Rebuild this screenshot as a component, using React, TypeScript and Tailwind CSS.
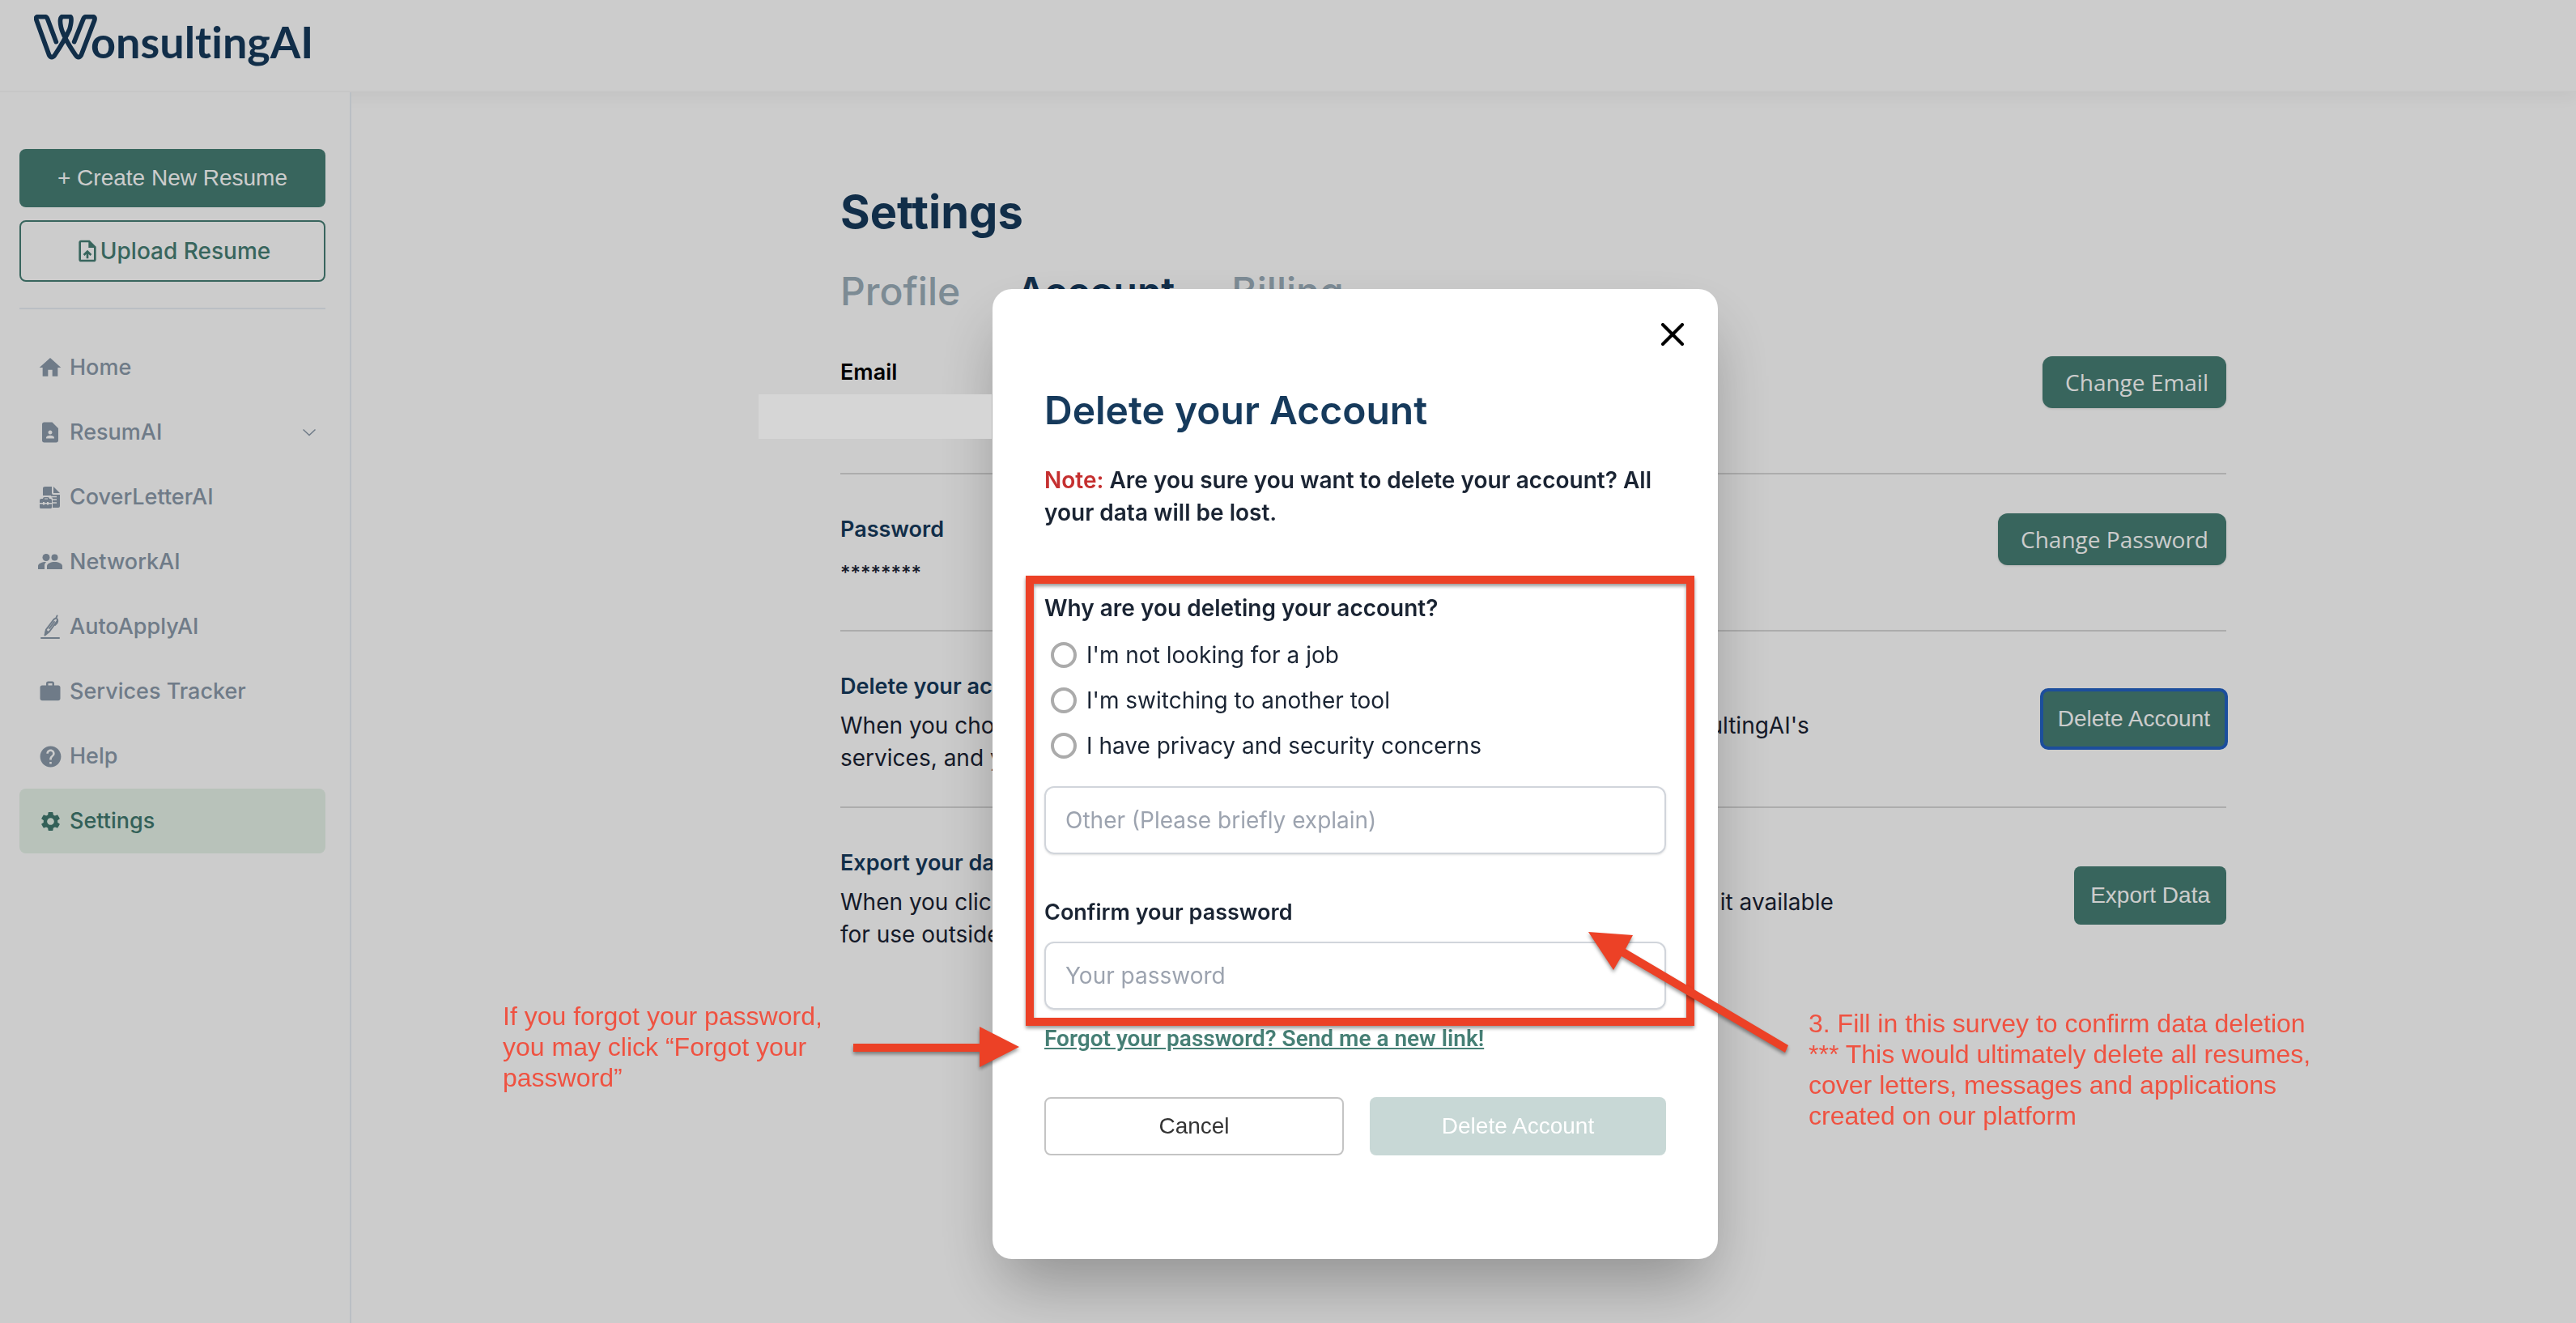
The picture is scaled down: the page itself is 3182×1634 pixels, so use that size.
import React from 'react';
import { MdContactPage, MdHelp, MdHome, MdSettings, MdUploadFile, MdWork } from 'react-icons/md';

const Logo: React.FC = () => (
  <a href="#" aria-label="WonsultingAI" className="flex items-start text-[#163a5c]">
    <svg
      className="h-14 w-[78px]"
      viewBox="36 24 234 168"
      fill="none"
      stroke="currentColor"
      strokeWidth="17"
      strokeLinecap="round"
      strokeLinejoin="round"
    >
      <path d="M118 125 L86 40 Q83 32 76 32 L50 32 Q41 32 45 44 L92 174 Q101 190 113 174 Q148 122 168 78 Q180 32 168 31 L144 31 Q128 32 136 70 Q144 106 190 174 Q201 190 211 174 L260 46 Q264 32 254 32 L230 32 Q222 32 219 40 L185 125" />
    </svg>
    <span className="-ml-2 font-[Lato,sans-serif] text-[54px] font-bold leading-[68px] [font-variant-ligatures:none]">
      onsultingAI
    </span>
  </a>
);

const CoverLetterIcon: React.FC = () => (
  <svg width="26" height="28" viewBox="0 0 26 28" fill="currentColor">
    <path d="M7 1h8v8q0 2 2 2h8v14q0 2-2 2h-7V16q0-2-2-2V12H4V3q0-2 3-2z" />
    <path d="M17 1l8 8h-8z" />
    <path d="M14 13.5h7M15 17h6M16 21h5" stroke="#fff" strokeWidth="1.5" />
    <path
      fillRule="evenodd"
      d="M4 16q0-2 2-2h4q2 0 2 2h1q2 0 2 2v3h-4v-1h-2v1H6v-1H4v1H0v-3q0-2 2-2zM6 15.500v1h4v-1zM0 22.500h4v1h2v-1h3v1h2v-1h4V26q0 2-1 2H1q-1 0-1-2z"
    />
  </svg>
);

const NetworkIcon: React.FC = () => (
  <svg width="30" height="20" viewBox="0 0 30 20" fill="currentColor">
    <circle cx="10" cy="4.500" r="4.500" />
    <circle cx="20.500" cy="4.500" r="4" />
    <path d="M11 19v-4c0-3 5-5 9.500-5S30 12 30 15v4z" />
    <path d="M0 19v-4c0-3 5-5 10-5-1.500 1.500-2 3-2 5v4z" />
  </svg>
);

const PenIcon: React.FC = () => (
  <svg width="24" height="30" viewBox="0 0 24 30" fill="none" stroke="currentColor" strokeLinecap="round" strokeLinejoin="round">
    <path d="M1 29h22" strokeWidth="2" />
    <path d="M5.500 25.500l1.500-7L16.500 6q2-2 3.500-1t.5 3L11 21z" strokeWidth="2" />
    <path d="M19.500 4l1-2.500M11 17l6-8M21 7q1 3-3 6" strokeWidth="2" />
    <path d="M5.500 25.500l4.500-4-3-2.500z" fill="currentColor" />
  </svg>
);

interface NavItem {
  label: string;
  icon: React.ReactNode;
  active?: boolean;
  expandable?: boolean;
}

const navItems: NavItem[] = [
  { label: 'Home', icon: <MdHome size={32} /> },
  { label: 'ResumAI', icon: <MdContactPage size={30} />, expandable: true },
  { label: 'CoverLetterAI', icon: <CoverLetterIcon /> },
  { label: 'NetworkAI', icon: <NetworkIcon /> },
  { label: 'AutoApplyAI', icon: <PenIcon /> },
  { label: 'Services Tracker', icon: <MdWork size={30} /> },
  { label: 'Help', icon: <MdHelp size={31} /> },
  { label: 'Settings', icon: <MdSettings size={29} />, active: true },
];

const Sidebar: React.FC = () => (
  <aside className="relative z-10 w-[434px] shrink-0 border-r-2 border-[#e9eff5] bg-white pl-6 pr-[30px] pt-[70px]">
    <div className="flex flex-col gap-4 border-b-2 border-[#e9eff5] pb-8">
      <button className="h-[72px] rounded-lg bg-[#467f75] font-['Liberation_Sans',Arial,sans-serif] text-[28px] text-white">
        + Create New Resume
      </button>
      <button className="flex h-[76px] items-center justify-center rounded-lg border-2 border-[#467f75] text-[28px] font-medium text-[#467f75]">
        <MdUploadFile size={32} />
        Upload Resume
      </button>
    </div>
    <nav className="flex flex-col pt-8">
      {navItems.map((item) => (
        <a
          key={item.label}
          href="#"
          className={`flex h-20 items-center gap-2 rounded-lg pl-[22px] pr-3 text-[27px] font-medium ${
            item.active ? 'bg-[#e6f3e9] text-[#40796f]' : 'text-[#8b9aaa]'
          }`}
        >
          <span className="flex w-8 justify-center">{item.icon}</span>
          <span className="flex-1">{item.label}</span>
          {item.expandable && (
            <svg width="16" height="10" viewBox="0 0 16 10" fill="none" stroke="currentColor" strokeWidth="1.500">
              <path d="M0.500 1.500 8 8.500l7.500-7" />
            </svg>
          )}
        </a>
      ))}
    </nav>
  </aside>
);

interface RowProps {
  title: string;
  titleClass?: string;
  children?: React.ReactNode;
  action: React.ReactNode;
  className: string;
}

const Row: React.FC<RowProps> = ({ title, titleClass = 'text-[#163a5c]', children, action, className }) => (
  <section className={`flex items-start justify-between border-[#d8d8d8] pt-12 text-[28px] leading-10 ${className}`}>
    <div>
      <h2 className={`text-[27px] font-semibold ${titleClass}`}>{title}</h2>
      {children}
    </div>
    {action}
  </section>
);

const roundButton =
  "h-16 shrink-0 rounded-xl bg-[#467f75] pl-7 pr-[22px] font-['Open_Sans',sans-serif] text-[28px] font-medium text-white shadow-sm";
const squareButton =
  "mt-6 h-[72px] shrink-0 rounded-lg bg-[#467f75] px-5 font-['Liberation_Sans',Arial,sans-serif] text-[28px] text-white";

const SettingsPage: React.FC = () => (
  <main className="flex-1 pl-[604px] pr-[432px] pt-28">
    <h1 className="text-[56px] font-bold leading-[72px] text-[#163a5c]">Settings</h1>
    <div className="mt-[30px] flex gap-[70px] text-[48px] font-medium leading-[64px] text-[#9caeba]">
      <button>Profile</button>
      <button className="font-semibold text-[#163a5c]">Account</button>
      <button>Billing</button>
    </div>

    <Row
      title="Email"
      titleClass="text-black"
      className="border-b-2 pb-20"
      action={<button className={roundButton}>Change Email</button>}
    />
    <Row
      title="Password"
      className="border-b-2 pb-[50px]"
      action={<button className={roundButton}>Change Password</button>}
    >
      <p className="mt-[14px] text-[24px] font-medium text-[#1a2233]">********</p>
    </Row>
    <Row
      title="Delete your account"
      className="border-b-2 pb-10"
      action={<button className={`${squareButton} outline-4 -outline-offset-2 outline-[#2362c4]`}>Delete Account</button>}
    >
      <p className="mt-2 text-[#1a2233]">
        When you choose to delete your account, you will no longer gain access to WonsultingAI's
        <br />
        services, and your personal data will be permanently lost.
      </p>
    </Row>
    <Row title="Export your data" className="pb-10" action={<button className={squareButton}>Export Data</button>}>
      <p className="mt-2 text-[#1a2233]">
        When you click export, we will gather all of your account data into a file and make it available
        <br />
        for use outside of our platform.
      </p>
    </Row>
  </main>
);

const reasons = ["I'm not looking for a job", "I'm switching to another tool", 'I have privacy and security concerns'];

const field =
  'h-[84px] w-full rounded-xl border-2 border-[#d1d5db] px-6 text-[28px] shadow-sm placeholder:text-[#9ca3af]';

const Annotations: React.FC = () => (
  <div className="pointer-events-none font-['Liberation_Sans',Arial,sans-serif] text-[32px] leading-[38px] text-[#ef5241]">
    <div className="absolute -left-[289px] top-[130px] h-[55px] w-72 bg-[#d6d6d6]" />
    <div className="absolute left-[41px] top-[354px] h-[556px] w-[826px] border-10 border-[#ec4126] drop-shadow-[0_3px_2px_rgba(0,0,0,0.4)]" />

    <p className="absolute -left-[605px] top-[879px] w-[420px]">If you forgot your password, you may click “Forgot your password”</p>
    <svg
      className="absolute -left-[172px] top-[911px] drop-shadow-[0_3px_2px_rgba(0,0,0,0.4)]"
      width="206"
      height="50"
      viewBox="0 0 206 50"
      fill="#ec4126"
    >
      <path d="M0 21h156V0l49 25-49 25V31H0z" />
    </svg>

    <svg
      className="absolute left-[736px] top-[794px] drop-shadow-[0_3px_2px_rgba(0,0,0,0.4)]"
      width="248"
      height="150"
      viewBox="0 0 248 150"
      fill="#ec4126"
    >
      <path d="M0 0l55 4-9 17 201 119-4 9L41 30 31 47z" />
    </svg>
    <p className="absolute left-[1008px] top-[888px] w-[640px]">
      3. Fill in this survey to confirm data deletion
      <br />
      *** This would ultimately delete all resumes, cover letters, messages and applications created on our platform
    </p>
  </div>
);

const DeleteAccountModal: React.FC = () => (
  <div className="fixed inset-0 z-20 flex items-start justify-center bg-black/20 pl-[166px] pt-[357px]">
    <div
      role="dialog"
      aria-labelledby="modal-title"
      className="relative w-[896px] rounded-3xl bg-white px-16 pb-32 pt-8 text-[28px] leading-10 text-[#1a2433] shadow-[0_40px_80px_-12px_rgba(0,0,0,0.3)]"
    >
      <div className="-mr-8 flex justify-end">
        <button aria-label="Close" className="flex size-12 items-center justify-center text-black">
          <svg width="28" height="28" viewBox="0 0 28 28" stroke="currentColor" strokeWidth="4" strokeLinecap="round">
            <path d="M2 2l24 24M26 2L2 26" />
          </svg>
        </button>
      </div>

      <h2 id="modal-title" className="mt-[38px] text-[48px] font-semibold leading-[64px] text-[#163a5c]">
        Delete your Account
      </h2>
      <p className="mt-[34px] font-semibold">
        <span className="text-[#c53030]">Note:</span> Are you sure you want to delete your account? All your data will be
        lost.
      </p>

      <form>
        <fieldset className="mt-[78px]">
          <legend className="font-semibold">Why are you deleting your account?</legend>
          <div className="pt-[10px]">
            {reasons.map((reason) => (
              <label key={reason} className="flex h-14 items-center gap-3 pl-2">
                <input type="radio" name="reason" className="size-8 appearance-none rounded-full border-4 border-[#ababab]" />
                {reason}
              </label>
            ))}
          </div>
        </fieldset>
        <input aria-label="Other reason" placeholder="Other (Please briefly explain)" className={`mt-[22px] block ${field}`} />

        <label htmlFor="password" className="mt-[52px] block text-[27px] font-semibold">
          Confirm your password
        </label>
        <input id="password" type="password" placeholder="Your password" className={`mt-4 block ${field}`} />

        <a
          href="#"
          className="mt-4 inline-block font-[Roboto,sans-serif] font-semibold text-[#467f75] underline"
        >
          Forgot your password? Send me a new link!
        </a>

        <div className="mt-[52px] flex gap-8 font-['Liberation_Sans',Arial,sans-serif]">
          <button type="button" className="h-[72px] flex-1 rounded-lg border-2 border-[#c4c4c4] text-[#333]">
            Cancel
          </button>
          <button type="submit" disabled className="h-[72px] flex-1 rounded-lg bg-[#c8d8d6] text-white">
            Delete Account
          </button>
        </div>
      </form>

      <Annotations />
    </div>
  </div>
);

const App: React.FC = () => {
  return (
    <div className="flex min-h-screen flex-col overflow-hidden bg-white font-[Inter,sans-serif]">
      <header className="relative h-[114px] border-b-2 border-[#f9f9f9] pl-[42px] pt-[18px] shadow-[0_8px_16px_rgba(0,0,0,0.04)]">
        <Logo />
      </header>
      <div className="flex flex-1">
        <Sidebar />
        <SettingsPage />
      </div>
      <DeleteAccountModal />
    </div>
  );
};

export default App;
